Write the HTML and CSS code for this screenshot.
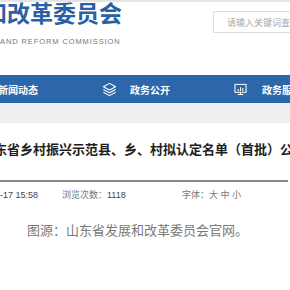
FILE: index.html
```html
<!DOCTYPE html>
<html lang="zh-CN">
<head>
  <meta charset="UTF-8">
  <meta name="viewport" content="width=device-width, initial-scale=1.0">
  <title>山东省发展和改革委员会</title>
  <link rel="stylesheet" href="styles.css">
</head>
<body>
  <div class="page">
    <header class="top">
      <div class="logo">
        <div class="logo-cn">和改革委员会</div>
        <div class="logo-en">AND REFORM COMMISSION</div>
      </div>
      <form class="search">
        <input type="text" placeholder="请输入关键词查询">
      </form>
    </header>

    <nav class="nav">
      <a class="nav-item">新闻动态</a>
      <a class="nav-item">
        <svg class="icon-layers" viewBox="0 0 16 16" fill="none" stroke="#fff" stroke-width="1.1" stroke-linejoin="round">
          <path d="M8 1.5 14.5 5 8 8.5 1.5 5Z"/>
          <path d="M1.5 8 8 11.5 14.5 8"/>
          <path d="M1.5 11 8 14.5 14.5 11"/>
        </svg>
        政务公开
      </a>
      <a class="nav-item">
        <svg class="icon-screen" viewBox="0 0 14 14" fill="none" stroke="#fff" stroke-width="1.1">
          <rect x="1" y="1.5" width="12" height="8.5"/>
          <path d="M4.5 8.5v-2M7 8.5v-4M9.5 8.5v-3"/>
          <path d="M7 10v2M4 12.5h6"/>
        </svg>
        政务服务
      </a>
    </nav>
    <div class="band"></div>

    <article class="article">
      <div class="article-head">
        <h1 class="title">山东省乡村振兴示范县、乡、村拟认定名单（首批）公示</h1>
      </div>
      <div class="meta">
        <span class="meta-date">-17 15:58</span>
        <span class="meta-views">浏览次数：<b>1118</b></span>
        <span class="meta-size">字体：大 中 小</span>
      </div>
    </article>

    <p class="caption">图源：山东省发展和改革委员会官网。</p>
  </div>
</body>
</html>
```

FILE: styles.css
```css
/* page */
body {
  margin: 0;
  background: #fff;
  font-family: "Liberation Sans", "Noto Sans CJK SC", sans-serif;
}

.page {
  width: 290px;
  height: 290px;
  overflow: hidden;
}

/* header */
.top {
  display: flex;
  height: 73px;
  border-top: 2px solid #e4e4e4;
}

.logo {
  width: 213px;
  flex-shrink: 0;
}

.logo-cn {
  margin-top: 1px;
  font-size: 23px;
  line-height: 23px;
  font-weight: bold;
  color: #2b5fa6;
  text-indent: -16px;
  white-space: nowrap;
}

.logo-en {
  margin-top: 11px;
  font-size: 7.5px;
  line-height: 10px;
  letter-spacing: 0.9px;
  color: #777;
  white-space: nowrap;
}

.search {
  margin: 9px 0 0;
  flex-shrink: 0;
}

.search input {
  width: 100px;
  height: 22px;
  box-sizing: border-box;
  padding: 0 0 0 13px;
  border: 1px solid #dedede;
  font-family: "Noto Sans CJK SC", sans-serif;
  font-size: 9px;
  outline: none;
}

.search input::placeholder {
  color: #aaa;
}

/* nav */
.nav {
  display: flex;
  align-items: center;
  gap: 64px;
  height: 28px;
  background: #2d67aa;
  white-space: nowrap;
}

.nav-item {
  display: flex;
  align-items: center;
  gap: 13px;
  flex-shrink: 0;
  font-size: 10px;
  font-weight: bold;
  color: #fff;
}

.nav-item:first-child {
  margin-left: -2px;
}

.icon-layers {
  width: 15px;
  height: 15px;
}

.icon-screen {
  width: 13px;
  height: 13px;
  margin-right: 2px;
}

.band {
  height: 20px;
  background: #eeeeee;
}

/* article */
.article-head {
  width: 288px;
  padding-top: 17px;
  padding-bottom: 20px;
  border-bottom: 2px solid #888;
}

.title {
  margin: 0;
  font-size: 13px;
  line-height: 20px;
  font-weight: bold;
  color: #1e1e1e;
  text-indent: -19px;
  white-space: nowrap;
}

.meta {
  display: flex;
  margin-top: 6px;
  font-size: 9px;
  line-height: 14px;
  color: #777;
  white-space: nowrap;
}

.meta-date {
  width: 62px;
  color: #444;
}

.meta-views {
  width: 120px;
}

.meta-views b {
  font-weight: normal;
  color: #444;
}

.caption {
  margin: 20px 0 0 27px;
  font-size: 13px;
  line-height: 18px;
  color: #7a7a7a;
  white-space: nowrap;
}
```
